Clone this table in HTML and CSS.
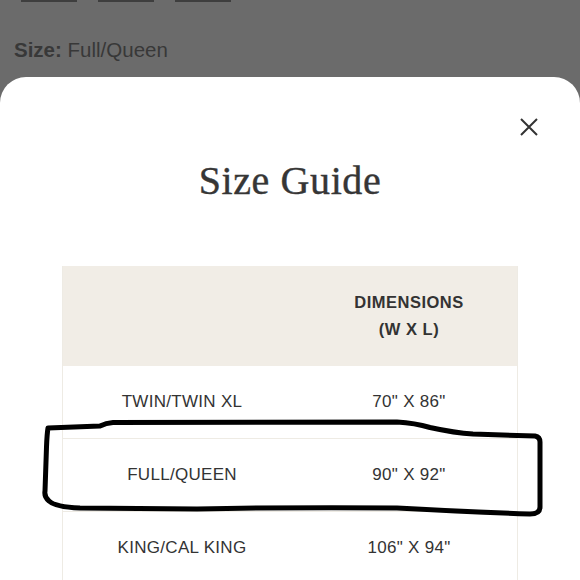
FILE: index.html
```html
<!DOCTYPE html>
<html>
<head>
<meta charset="utf-8">
<link rel="stylesheet" href="styles.css">
</head>
<body>
<div class="page">
  <div class="swatches">
    <div class="swatch"></div>
    <div class="swatch"></div>
    <div class="swatch"></div>
  </div>
  <div class="size-label"><b>Size:</b> Full/Queen</div>
  <div class="modal">
    <div class="modal-head">
      <button class="close" aria-label="Close">
        <svg width="18" height="18" viewBox="0 0 18 18"><path d="M1 1 L17 17 M17 1 L1 17" stroke="#333" stroke-width="2" fill="none"/></svg>
      </button>
    </div>
    <h1 class="title">Size Guide</h1>
    <div class="table">
      <div class="row head">
        <div class="cell"></div>
        <div class="cell">DIMENSIONS<br>(W X L)</div>
      </div>
      <div class="row">
        <div class="cell">TWIN/TWIN XL</div>
        <div class="cell">70" X 86"</div>
      </div>
      <div class="row">
        <div class="cell">FULL/QUEEN</div>
        <div class="cell">90" X 92"</div>
      </div>
      <div class="row">
        <div class="cell">KING/CAL KING</div>
        <div class="cell">106" X 94"</div>
      </div>
    </div>
  </div>
  <svg class="scribble" width="580" height="580" viewBox="0 0 580 580">
    <path d="M48 428 L100 426 Q106 423 113 422.5 L397 422 Q415 423 430 427.5 Q455 433 473 434 L535 436 Q540 437 540 442 L540 507 Q540 514 530 514 Q470 512 397 508 Q300 507 197 509 L80 508 Q55 507 49 501 Q44 497 45 491 L46.5 447 Q47 434 48 428 Z" fill="none" stroke="#000" stroke-width="5" stroke-linejoin="round"/>
  </svg>
</div>
</body>
</html>
```

FILE: styles.css
```css
html, body {
  margin: 0;
  padding: 0;
  background: #6b6b6b;
}
.page {
  position: relative;
  width: 580px;
  height: 580px;
  overflow: hidden;
  font-family: "Liberation Sans", Arial, sans-serif;
}
.swatches {
  display: flex;
  gap: 21px;
  padding-left: 21px;
}
.swatch {
  width: 56px;
  height: 2px;
  background: #3e3e3e;
}
.size-label {
  padding: 35px 0 0 14px;
  font-size: 20.5px;
  line-height: 26px;
  color: #383838;
  height: 40px;
}
.size-label b {
  font-weight: bold;
}
.modal {
  background: #fff;
  border-radius: 26px 26px 0 0;
  padding-top: 41px;
  height: 560px;
}
.modal-head {
  display: flex;
  justify-content: flex-end;
  padding-right: 42px;
  height: 18px;
}
.close {
  border: 0;
  background: none;
  padding: 0;
  width: 18px;
  height: 18px;
  display: block;
}
.close svg {
  display: block;
}
.title {
  margin: 22px 0 0;
  text-align: center;
  font-family: "Liberation Serif", "Times New Roman", serif;
  font-weight: normal;
  font-size: 40px;
  line-height: 46px;
  letter-spacing: 0.6px;
  color: #363636;
  -webkit-text-stroke: 0.4px #363636;
}
.table {
  margin: 62px 62px 0;
  border-left: 1px solid #eeebe4;
  border-right: 1px solid #eeebe4;
}
.row {
  display: grid;
  grid-template-columns: 238px 1fr;
  align-items: center;
  height: 72px;
  border-bottom: 1px solid #eeebe4;
  font-size: 17px;
  letter-spacing: 0.3px;
  color: #333;
}
.row .cell {
  text-align: center;
}
.row.head {
  height: 100px;
  background: #f1ede6;
  border-bottom: 0;
  font-weight: bold;
  line-height: 27px;
  font-size: 16.5px;
  letter-spacing: 0.5px;
  color: #333;
}
.scribble {
  position: absolute;
  left: 0;
  top: 0;
  pointer-events: none;
}
```
